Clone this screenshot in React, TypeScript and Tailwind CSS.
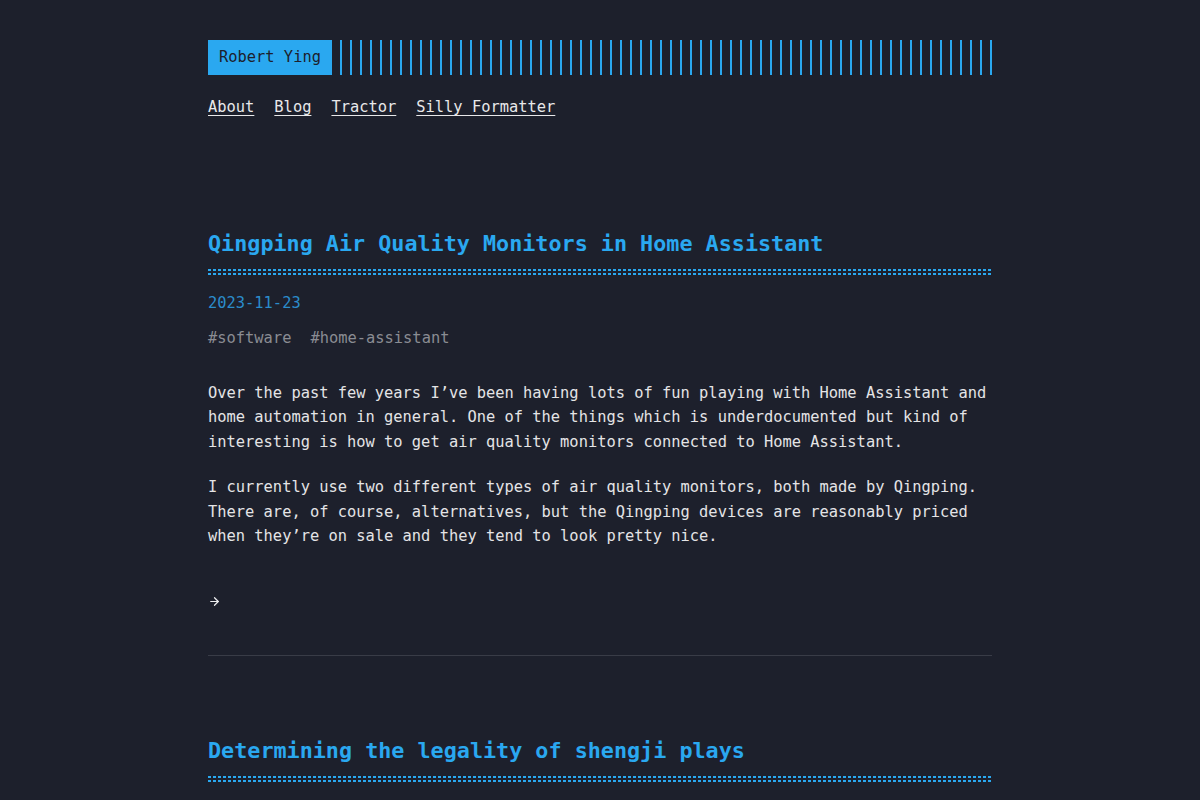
import React from 'react'
import { ArrowRight } from 'lucide-react'

const posts = [
  {
    title: 'Qingping Air Quality Monitors in Home Assistant',
    date: '2023-11-23',
    tags: ['software', 'home-assistant'],
    paragraphs: [
      'Over the past few years I’ve been having lots of fun playing with Home Assistant and home automation in general. One of the things which is underdocumented but kind of interesting is how to get air quality monitors connected to Home Assistant.',
      'I currently use two different types of air quality monitors, both made by Qingping. There are, of course, alternatives, but the Qingping devices are reasonably priced when they’re on sale and they tend to look pretty nice.',
    ],
  },
  {
    title: 'Determining the legality of shengji plays',
    date: '2023-08-02',
    tags: ['software'],
    paragraphs: [],
  },
]

function DottedRule() {
  return (
    <div className="flex flex-col gap-[2px]">
      <div className="h-[2px] bg-[repeating-linear-gradient(90deg,#2aa8f0_0_3px,transparent_3px_5px)]" />
      <div className="h-[2px] bg-[repeating-linear-gradient(90deg,#2aa8f0_0_3px,transparent_3px_5px)]" />
    </div>
  )
}

function Post({ post, first }: { post: (typeof posts)[number]; first: boolean }) {
  return (
    <article className={first ? 'mt-[110px]' : 'mt-[81px]'}>
      <h2 className="text-[21.75px] leading-[28px] font-bold text-[#2aa8f0]">{post.title}</h2>
      <div className="mt-[11px]">
        <DottedRule />
      </div>
      <div className="mt-[16px] text-[#2b8ccb]">{post.date}</div>
      <div className="mt-[11px] flex gap-[19px] text-[#8a8c93]">
        {post.tags.map((t) => (
          <span key={t}>#{t}</span>
        ))}
      </div>
      <div className="mt-[30px] flex flex-col gap-[21px] text-[#e4e4e6]">
        {post.paragraphs.map((p, i) => (
          <p key={i}>{p}</p>
        ))}
      </div>
      {post.paragraphs.length > 0 && (
        <>
          <div className="mt-[41px] flex h-[24.5px] items-center text-[#eeeef0]">
            <ArrowRight size={13} strokeWidth={2.2} />
          </div>
          <hr className="mt-[41px] border-0 border-t border-[#393c47]" />
        </>
      )}
    </article>
  )
}

export default function App() {
  return (
    <div className="min-h-screen bg-[#1d202c] font-['DejaVu_Sans_Mono',monospace] text-[15.4px] leading-[24.5px]">
      <div className="mx-auto w-[784px] pt-10 pb-20">
        <header className="flex h-[35px]">
          <div className="flex items-center bg-[#2aa8f0] px-[11px] text-[#1d202c]">Robert Ying</div>
          <div className="ml-2 flex-1 bg-[repeating-linear-gradient(90deg,#2aa8f0_0_2px,transparent_2px_10px)]" />
        </header>
        <nav className="mt-[20px] flex gap-5 text-[#e8e8ea]">
          {['About', 'Blog', 'Tractor', 'Silly Formatter'].map((l) => (
            <a key={l} href="#" className="underline underline-offset-[3px]">
              {l}
            </a>
          ))}
        </nav>
        {posts.map((p, i) => (
          <Post key={p.title} post={p} first={i === 0} />
        ))}
      </div>
    </div>
  )
}
